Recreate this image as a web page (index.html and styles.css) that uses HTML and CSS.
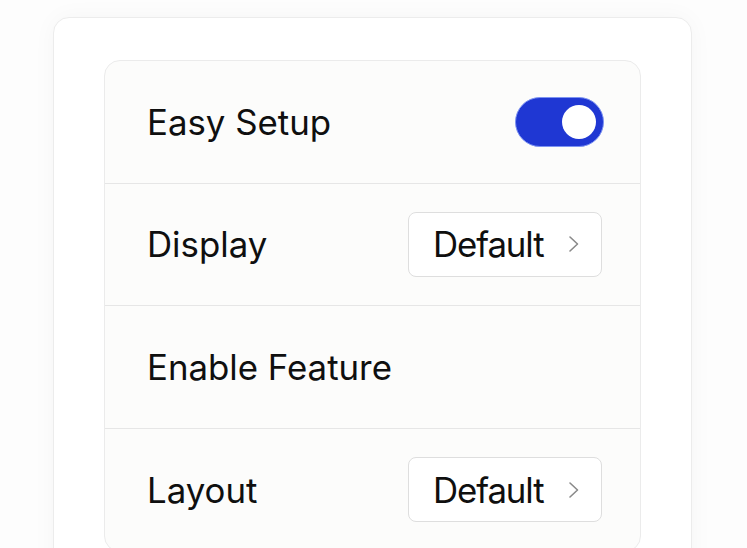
FILE: index.html
```html
<!DOCTYPE html>
<html lang="en">
<head>
<meta charset="utf-8">
<link rel="stylesheet" href="styles.css">
</head>
<body>
<div class="page">
  <div class="outer">
    <div class="card">
      <div class="row">
        <span class="label">Easy Setup</span>
        <div class="toggle"><div class="thumb"></div></div>
      </div>
      <div class="row">
        <span class="label">Display</span>
        <div class="select">
          <span class="value">Default</span>
          <svg class="chev" width="12" height="18" viewBox="0 0 12 18"><path d="M2 2 L9.5 9 L2 16" fill="none" stroke="#8a8a8a" stroke-width="1.6" stroke-linecap="round" stroke-linejoin="round"/></svg>
        </div>
      </div>
      <div class="row">
        <span class="label">Enable Feature</span>
      </div>
      <div class="row">
        <span class="label">Layout</span>
        <div class="select">
          <span class="value">Default</span>
          <svg class="chev" width="12" height="18" viewBox="0 0 12 18"><path d="M2 2 L9.5 9 L2 16" fill="none" stroke="#8a8a8a" stroke-width="1.6" stroke-linecap="round" stroke-linejoin="round"/></svg>
        </div>
      </div>
    </div>
  </div>
</div>
</body>
</html>
```

FILE: styles.css
```css
html, body {
  margin: 0;
  padding: 0;
  background: #fdfdfd;
}
.page {
  box-sizing: border-box;
  height: 548px;
  overflow: hidden;
  padding: 17px 0 0 53px;
}
.outer {
  box-sizing: border-box;
  width: 639px;
  border: 1px solid #ececec;
  border-radius: 16px;
  background: #ffffff;
  box-shadow: 0 0 24px rgba(0, 0, 0, 0.035);
  padding: 42px 50px 40px 50px;
  font-family: Inter, "Noto Sans", sans-serif;
}
.card {
  border: 1px solid #ebebeb;
  border-radius: 16px;
  background: #fcfcfb;
  overflow: hidden;
}
.row {
  box-sizing: border-box;
  height: 122.5px;
  display: flex;
  align-items: center;
  justify-content: space-between;
  padding: 0 38px 0 42px;
  border-bottom: 1px solid #e6e6e6;
}
.row:last-child {
  border-bottom: none;
}
.label {
  font-size: 34.8px;
  color: #0f0f0f;
}
.toggle {
  box-sizing: border-box;
  width: 89px;
  height: 50px;
  border-radius: 25px;
  background: #1f37d3;
  border: 1.5px solid #7d93f2;
  display: flex;
  align-items: center;
  justify-content: flex-end;
  padding-right: 7px;
  margin-right: -2px;
}
.thumb {
  width: 34px;
  height: 34px;
  border-radius: 50%;
  background: #ffffff;
}
.select {
  box-sizing: border-box;
  width: 194px;
  height: 65px;
  border: 1px solid #dedede;
  border-radius: 8px;
  background: #ffffff;
  display: flex;
  align-items: center;
  padding-left: 24px;
}
.value {
  font-size: 34.8px;
  color: #0f0f0f;
  letter-spacing: -1.1px;
}
.chev {
  margin-left: auto;
  margin-right: 21px;
}
```
